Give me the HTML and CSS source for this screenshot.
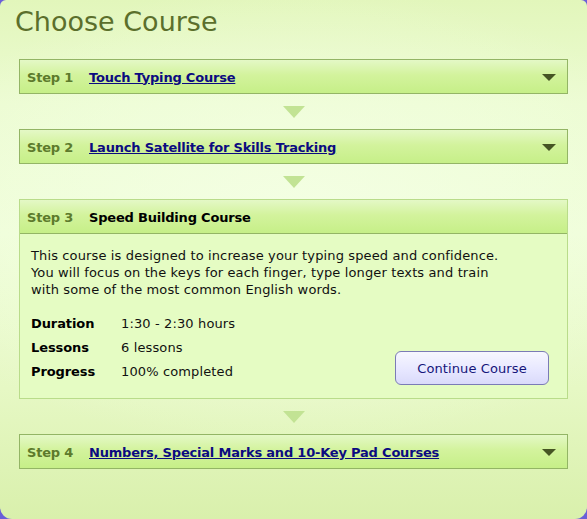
FILE: index.html
```html
<!DOCTYPE html>
<html>
<head>
<meta charset="utf-8">
<link rel="stylesheet" href="styles.css">
</head>
<body>
<div class="panel">
  <h1 class="title">Choose Course</h1>
  <div class="steps">
    <div class="step">
      <div class="bar">
        <span class="num">Step 1</span>
        <a class="link" href="#">Touch Typing Course</a>
        <span class="caret"></span>
      </div>
    </div>
    <div class="connector"><span></span></div>
    <div class="step">
      <div class="bar">
        <span class="num">Step 2</span>
        <a class="link" href="#">Launch Satellite for Skills Tracking</a>
        <span class="caret"></span>
      </div>
    </div>
    <div class="connector"><span></span></div>
    <div class="step open">
      <div class="bar">
        <span class="num">Step 3</span>
        <span class="current">Speed Building Course</span>
      </div>
      <div class="body">
        <p class="desc">This course is designed to increase your typing speed and confidence.<br>You will focus on the keys for each finger, type longer texts and train<br>with some of the most common English words.</p>
        <div class="footer">
          <dl class="info">
            <dt>Duration</dt><dd>1:30 - 2:30 hours</dd>
            <dt>Lessons</dt><dd>6 lessons</dd>
            <dt>Progress</dt><dd>100% completed</dd>
          </dl>
          <button class="btn">Continue Course</button>
        </div>
      </div>
    </div>
    <div class="connector"><span></span></div>
    <div class="step">
      <div class="bar">
        <span class="num">Step 4</span>
        <a class="link" href="#">Numbers, Special Marks and 10-Key Pad Courses</a>
        <span class="caret"></span>
      </div>
    </div>
  </div>
</div>
</body>
</html>
```

FILE: styles.css
```css
* { box-sizing: border-box; }
html, body { margin: 0; padding: 0; }
body {
  background: #6a5fd8;
  width: 587px;
  height: 519px;
  font-family: "DejaVu Sans", Verdana, sans-serif;
  overflow: hidden;
}
.panel {
  width: 587px;
  height: 519px;
  border-radius: 6px 6px 12px 12px;
  background:
    radial-gradient(ellipse 70% 45% at 50% 42%, rgba(244,255,228,0.9), rgba(244,255,228,0) 100%),
    linear-gradient(to bottom, #e2f6bb 0%, #ecfcd2 20%, #effed9 45%, #e6f8c4 75%, #d9f0ac 100%);
  padding: 6px 19px 0 19px;
}
.title {
  margin: 0 0 0 -4px;
  font-weight: normal;
  font-size: 27px;
  line-height: 31px;
  color: #5b6f2c;
  height: 53px;
}
.steps { display: flex; flex-direction: column; }
.step { border: 1px solid #93b565; }
.bar {
  height: 33px;
  display: flex;
  align-items: center;
  padding-left: 7px;
  padding-top: 1px;
  background: linear-gradient(to bottom, #e4f8c6 0%, #d3f39d 45%, #c6ef88 100%);
  font-size: 13px;
  font-weight: bold;
  letter-spacing: -0.2px;
}
.num { color: #5d7a2c; width: 62px; }
.link { color: #0b0b80; text-decoration: underline; }
.current { color: #000; }
.caret {
  margin-left: auto;
  margin-right: 11px;
  width: 0; height: 0;
  border-left: 7px solid transparent;
  border-right: 7px solid transparent;
  border-top: 7px solid #465524;
}
.connector {
  height: 35px;
  display: flex;
  justify-content: center;
  align-items: center;
}
.connector span {
  width: 0; height: 0;
  border-left: 11px solid transparent;
  border-right: 11px solid transparent;
  border-top: 12px solid #c2e394;
}
.step.open .bar { border-bottom: 1px solid #93b565; height: 34px; }
.body {
  background: #e5fcc3;
  padding: 13px 11px 0 11px;
  height: 164px;
  font-size: 13px;
  color: #111;
  letter-spacing: 0.13px;
}
.step.open { border-color: #b9dc8a; }
.step.open > .bar { border-left: 0; }
.desc { margin: 0; line-height: 17px; }
.footer {
  display: flex;
  align-items: flex-end;
  justify-content: space-between;
  margin-top: 17px;
  padding-right: 7px;
}
.info {
  margin: 0;
  display: grid;
  grid-template-columns: 90px auto;
  row-gap: 7px;
  line-height: 17px;
}
.info dt { font-weight: bold; color: #000; letter-spacing: -0.1px; }
.info dd { margin: 0; }
.btn {
  width: 154px;
  height: 34px;
  margin-bottom: -5px;
  border: 1px solid #7b7bb6;
  border-radius: 6px;
  background: linear-gradient(to bottom, #f7f7ff 0%, #e6e6ff 60%, #dadafa 100%);
  color: #15157a;
  font-family: "DejaVu Sans", Verdana, sans-serif;
  font-size: 13px;
  letter-spacing: 0.1px;
  padding: 0;
}
```
